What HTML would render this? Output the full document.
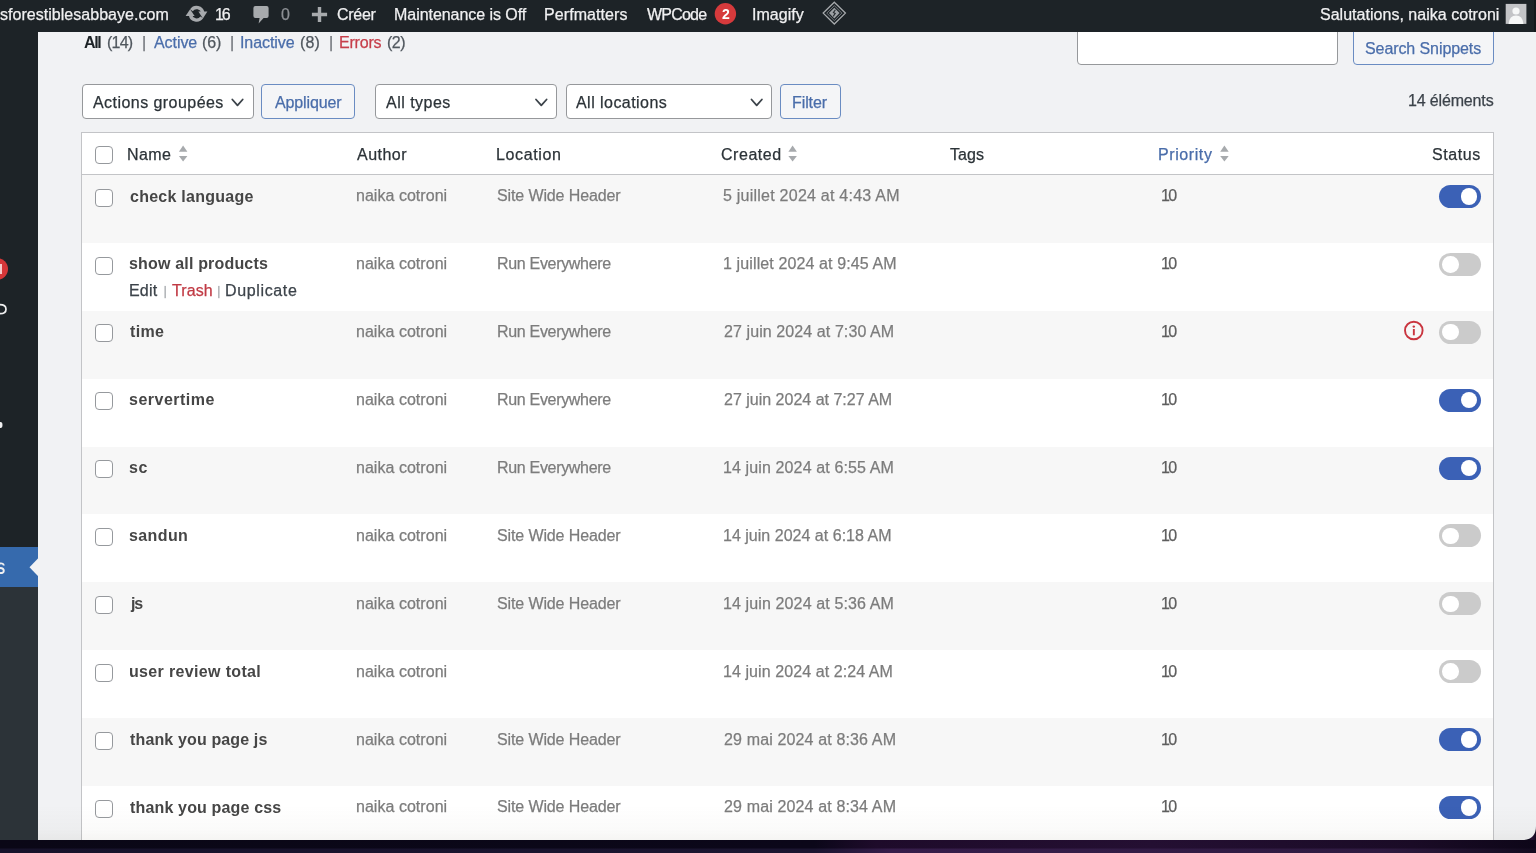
<!DOCTYPE html>
<html><head><meta charset="utf-8">
<style>
html,body{margin:0;padding:0;}
body{width:1536px;height:853px;overflow:hidden;position:relative;background:#f1f2f4;font-family:"Liberation Sans",sans-serif;}
.a{position:absolute;box-sizing:border-box;}
.t{position:absolute;white-space:nowrap;line-height:1;will-change:transform;font-family:"Liberation Sans",sans-serif;}
.cb{position:absolute;box-sizing:border-box;width:18px;height:18px;border:1.1px solid #96999d;border-radius:4px;background:#fff;left:95px;}
.tg{position:absolute;box-sizing:border-box;left:1439.2px;width:41.6px;height:23px;border-radius:12px;}
.tg.on{background:#3b61b6;}
.tg.off{background:#cbcbcb;}
.tg i{position:absolute;width:16.5px;height:16.5px;border-radius:50%;background:#fff;top:3.25px;}
.tg.on i{left:21.8px;}
.tg.off i{left:3.3px;}
.sel{position:absolute;box-sizing:border-box;top:84.4px;height:34.6px;border:1.2px solid #96989b;border-radius:4px;background:#fff;}
.btn{position:absolute;box-sizing:border-box;border:1px solid #6a8cc2;border-radius:4px;background:#f4f5f7;}
.chev{position:absolute;width:8px;height:8px;border-right:2px solid #3c434a;border-bottom:2px solid #3c434a;transform:rotate(45deg);}
</style></head><body>

<!-- sidebar -->
<div class="a" style="left:0;top:32px;width:38.3px;height:516px;background:#1d2327;"></div>
<div class="a" style="left:0;top:547.4px;width:38.3px;height:39.7px;background:#366aad;"></div>
<div class="a" style="left:0;top:587.1px;width:38.3px;height:253px;background:#2c3338;"></div>

<!-- sidebar details -->
<svg class="a" style="left:0;top:0;" width="40" height="853" viewBox="0 0 40 853">
 <circle cx="-3" cy="269" r="11" fill="#d63638"/>
 <rect x="0" y="264" width="2" height="10" fill="#f6c9c9"/>
 <path d="M0 304.6 Q6 304.6 6 309.2 Q6 313.7 0 313.7" fill="none" stroke="#f0f0f1" stroke-width="1.7"/>
 <ellipse cx="0.5" cy="425" rx="2" ry="3" fill="#f0f0f1"/>
 <path d="M0 563.5 Q3.5 563 3.8 565.5 M0 568 Q3.8 568.2 3.8 570.8 Q3.6 573.3 0 573" fill="none" stroke="#f0f0f1" stroke-width="1.9"/>
 <path d="M38.4 558 L29.5 567.2 L38.4 576.4 Z" fill="#f1f2f4"/>
</svg>
<!-- search -->
<div class="a" style="left:1076.6px;top:20px;width:261.4px;height:45.3px;background:#fff;border:1.2px solid #96989b;border-radius:4px;"></div>
<div class="btn" style="left:1352.5px;top:20px;width:141.4px;height:45.3px;"></div>

<!-- toolbar -->
<div class="sel" style="left:82.25px;width:171.5px;"></div>
<div class="btn" style="left:261.2px;top:84.4px;width:93.5px;height:34.6px;"></div>
<div class="sel" style="left:375.4px;width:181.4px;"></div>
<div class="sel" style="left:566.2px;width:206px;"></div>
<div class="btn" style="left:780px;top:84.4px;width:60.7px;height:34.6px;"></div>

<!-- table -->
<div class="a" style="left:80.9px;top:132px;width:1413px;height:720px;background:#fff;border:1px solid #c3c4c7;"></div>
<div class="a" style="left:81.9px;top:174px;width:1411px;height:1px;background:#c3c4c7;"></div>

<div class="a" style="left:81.9px;top:175.00px;width:1411px;height:67.90px;background:#f7f7f7;"></div>
<div class="a" style="left:81.9px;top:310.80px;width:1411px;height:67.90px;background:#f7f7f7;"></div>
<div class="a" style="left:81.9px;top:446.60px;width:1411px;height:67.90px;background:#f7f7f7;"></div>
<div class="a" style="left:81.9px;top:582.40px;width:1411px;height:67.90px;background:#f7f7f7;"></div>
<div class="a" style="left:81.9px;top:718.20px;width:1411px;height:67.90px;background:#f7f7f7;"></div>
<div class="cb" style="top:146.4px"></div>
<div class="cb" style="top:188.60px"></div>
<div class="cb" style="top:256.50px"></div>
<div class="cb" style="top:324.40px"></div>
<div class="cb" style="top:392.30px"></div>
<div class="cb" style="top:460.20px"></div>
<div class="cb" style="top:528.10px"></div>
<div class="cb" style="top:596.00px"></div>
<div class="cb" style="top:663.90px"></div>
<div class="cb" style="top:731.80px"></div>
<div class="cb" style="top:799.70px"></div>
<div class="tg on" style="top:184.90px"><i></i></div>
<div class="tg off" style="top:252.80px"><i></i></div>
<div class="tg off" style="top:320.70px"><i></i></div>
<div class="tg on" style="top:388.60px"><i></i></div>
<div class="tg on" style="top:456.50px"><i></i></div>
<div class="tg off" style="top:524.40px"><i></i></div>
<div class="tg off" style="top:592.30px"><i></i></div>
<div class="tg off" style="top:660.20px"><i></i></div>
<div class="tg on" style="top:728.10px"><i></i></div>
<div class="tg on" style="top:796.00px"><i></i></div>


<!-- admin bar -->
<div class="a" style="left:0;top:0;width:1536px;height:32.3px;background:#1d2327;"></div>
<svg class="a" style="left:0;top:0;" width="1536" height="33" viewBox="0 0 1536 33">
 <g fill="none" stroke="#a7aaad" stroke-width="3.3">
  <path d="M191.44 10.19 A6.3 6.3 0 0 1 202.80 12.71"/>
  <path d="M201.76 17.41 A6.3 6.3 0 0 1 190.40 14.89"/>
 </g>
 <path fill="#a7aaad" d="M198.4 11.6 L207.4 11.6 L202.9 18.4 Z"/>
 <path fill="#a7aaad" d="M185.6 16.0 L194.6 16.0 L190.1 9.2 Z"/>
 <path fill="#a7aaad" d="M255.4 6 H266.6 Q268.6 6 268.6 8 V16 Q268.6 18 266.6 18 H263.6 L258.6 23.5 L259.6 18 H255.4 Q253.4 18 253.4 16 V8 Q253.4 6 255.4 6 Z"/>
 <path fill="#a7aaad" d="M317.8 6.9 H321.2 V12.8 H327.1 V16.2 H321.2 V22 H317.8 V16.2 H311.9 V12.8 H317.8 Z"/>
 <circle cx="725.4" cy="13.8" r="10.7" fill="#d63a3c"/>
 <path d="M834.3 2.2 L845.4 13.1 L834.3 24 L823.2 13.1 Z" fill="none" stroke="#a7aaad" stroke-width="1.3"/>
 <path d="M834.3 5.6 L841.8 13.1 L834.3 20.6 L826.8 13.1 Z" fill="none" stroke="#73787d" stroke-width="1"/>
 <path fill="#9da1a5" d="M834.3 7.8 L839.6 13.1 L834.3 18.4 L829 13.1 Z"/>
 <path fill="none" stroke="#2a2f33" stroke-width="1.1" d="M835.4 9.8 L833.4 12.6 L835.2 13.4 L833.2 16.4"/>
 <rect x="1505.7" y="3.9" width="20.7" height="20" fill="#c3c4c7"/>
 <circle cx="1516" cy="11" r="3.6" fill="#f6f7f7"/>
 <path fill="#f6f7f7" d="M1508.5 23.9 Q1509.5 15.6 1516 15.6 Q1522.5 15.6 1523.5 23.9 Z"/>
</svg>
<div class="a" style="left:1534px;top:0;width:2px;height:32.3px;background:#15191c;"></div>
<div class="t" style="left:-0.50px;top:6.76px;font-size:16px;color:#f0f0f1;letter-spacing:0.033px;-webkit-text-stroke:0.25px #f0f0f1">sforestiblesabbaye.com</div>
<div class="t" style="left:215.40px;top:6.76px;font-size:16px;color:#f0f0f1;letter-spacing:-2.150px;-webkit-text-stroke:0.25px #f0f0f1">16</div>
<div class="t" style="left:281.00px;top:6.76px;font-size:16px;color:#8c8f94;letter-spacing:0.000px;-webkit-text-stroke:0.25px #8c8f94">0</div>
<div class="t" style="left:336.70px;top:6.76px;font-size:16px;color:#f0f0f1;letter-spacing:-0.275px;-webkit-text-stroke:0.25px #f0f0f1">Créer</div>
<div class="t" style="left:393.70px;top:6.76px;font-size:16px;color:#f0f0f1;letter-spacing:-0.047px;-webkit-text-stroke:0.25px #f0f0f1">Maintenance is Off</div>
<div class="t" style="left:544.30px;top:6.76px;font-size:16px;color:#f0f0f1;letter-spacing:0.080px;-webkit-text-stroke:0.25px #f0f0f1">Perfmatters</div>
<div class="t" style="left:647.20px;top:6.76px;font-size:16px;color:#f0f0f1;letter-spacing:-0.780px;-webkit-text-stroke:0.25px #f0f0f1">WPCode</div>
<div class="t" style="left:752.10px;top:6.76px;font-size:16px;color:#f0f0f1;letter-spacing:0.050px;-webkit-text-stroke:0.25px #f0f0f1">Imagify</div>
<div class="t" style="left:1319.70px;top:6.76px;font-size:16px;color:#f0f0f1;letter-spacing:0.024px;-webkit-text-stroke:0.25px #f0f0f1">Salutations, naika cotroni</div>
<div class="t" style="left:84.30px;top:34.96px;font-size:16px;color:#1d2327;letter-spacing:-1.400px;font-weight:700">All</div>
<div class="t" style="left:107.30px;top:34.96px;font-size:16px;color:#50575e;letter-spacing:-0.767px;-webkit-text-stroke:0.25px #50575e">(14)</div>
<div class="t" style="left:142.40px;top:34.96px;font-size:16px;color:#6f7378;letter-spacing:0.000px;-webkit-text-stroke:0.25px #6f7378">|</div>
<div class="t" style="left:153.60px;top:34.96px;font-size:16px;color:#4a6daa;letter-spacing:-0.060px;-webkit-text-stroke:0.25px #4a6daa">Active</div>
<div class="t" style="left:201.60px;top:34.96px;font-size:16px;color:#50575e;letter-spacing:-0.150px;-webkit-text-stroke:0.25px #50575e">(6)</div>
<div class="t" style="left:229.60px;top:34.96px;font-size:16px;color:#6f7378;letter-spacing:0.000px;-webkit-text-stroke:0.25px #6f7378">|</div>
<div class="t" style="left:240.00px;top:34.96px;font-size:16px;color:#4a6daa;letter-spacing:-0.071px;-webkit-text-stroke:0.25px #4a6daa">Inactive</div>
<div class="t" style="left:300.00px;top:34.96px;font-size:16px;color:#50575e;letter-spacing:0.100px;-webkit-text-stroke:0.25px #50575e">(8)</div>
<div class="t" style="left:328.50px;top:34.96px;font-size:16px;color:#6f7378;letter-spacing:0.000px;-webkit-text-stroke:0.25px #6f7378">|</div>
<div class="t" style="left:339.00px;top:34.96px;font-size:16px;color:#c63e4a;letter-spacing:-0.200px;-webkit-text-stroke:0.25px #c63e4a">Errors</div>
<div class="t" style="left:386.50px;top:34.96px;font-size:16px;color:#50575e;letter-spacing:-0.500px;-webkit-text-stroke:0.25px #50575e">(2)</div>
<div class="t" style="left:1364.60px;top:40.76px;font-size:16px;color:#4a6daa;letter-spacing:-0.086px;-webkit-text-stroke:0.25px #4a6daa">Search Snippets</div>
<div class="t" style="left:93.20px;top:95.06px;font-size:16px;color:#2c3338;letter-spacing:0.447px;-webkit-text-stroke:0.25px #2c3338">Actions groupées</div>
<div class="t" style="left:274.60px;top:95.06px;font-size:16px;color:#4a6daa;letter-spacing:-0.125px;-webkit-text-stroke:0.25px #4a6daa">Appliquer</div>
<div class="t" style="left:385.90px;top:95.06px;font-size:16px;color:#2c3338;letter-spacing:0.475px;-webkit-text-stroke:0.25px #2c3338">All types</div>
<div class="t" style="left:576.30px;top:95.06px;font-size:16px;color:#2c3338;letter-spacing:0.450px;-webkit-text-stroke:0.25px #2c3338">All locations</div>
<div class="t" style="left:791.80px;top:95.06px;font-size:16px;color:#4a6daa;letter-spacing:-0.100px;-webkit-text-stroke:0.25px #4a6daa">Filter</div>
<div class="t" style="left:1407.90px;top:92.76px;font-size:16px;color:#3c434a;letter-spacing:-0.150px;-webkit-text-stroke:0.25px #3c434a">14 éléments</div>
<div class="t" style="left:127.30px;top:147.46px;font-size:16px;color:#2c3338;letter-spacing:0.400px;-webkit-text-stroke:0.25px #2c3338">Name</div>
<div class="t" style="left:356.60px;top:147.46px;font-size:16px;color:#2c3338;letter-spacing:0.480px;-webkit-text-stroke:0.25px #2c3338">Author</div>
<div class="t" style="left:496.20px;top:147.46px;font-size:16px;color:#2c3338;letter-spacing:0.643px;-webkit-text-stroke:0.25px #2c3338">Location</div>
<div class="t" style="left:720.70px;top:147.46px;font-size:16px;color:#2c3338;letter-spacing:0.533px;-webkit-text-stroke:0.25px #2c3338">Created</div>
<div class="t" style="left:950.20px;top:147.46px;font-size:16px;color:#2c3338;letter-spacing:0.067px;-webkit-text-stroke:0.25px #2c3338">Tags</div>
<div class="t" style="left:1158.30px;top:147.46px;font-size:16px;color:#4a6daa;letter-spacing:0.586px;-webkit-text-stroke:0.25px #4a6daa">Priority</div>
<div class="t" style="left:1432.20px;top:147.46px;font-size:16px;color:#2c3338;letter-spacing:0.580px;-webkit-text-stroke:0.25px #2c3338">Status</div>
<div class="t" style="left:130.00px;top:188.56px;font-size:16px;color:#464646;letter-spacing:0.254px;font-weight:700">check language</div>
<div class="t" style="left:355.60px;top:188.36px;font-size:16px;color:#7c7c7c;letter-spacing:0.033px;-webkit-text-stroke:0.25px #7c7c7c">naika cotroni</div>
<div class="t" style="left:496.50px;top:188.36px;font-size:16px;color:#7c7c7c;letter-spacing:-0.120px;-webkit-text-stroke:0.25px #7c7c7c">Site Wide Header</div>
<div class="t" style="left:722.60px;top:188.36px;font-size:16px;color:#7c7c7c;letter-spacing:0.237px;-webkit-text-stroke:0.25px #7c7c7c">5 juillet 2024 at 4:43 AM</div>
<div class="t" style="left:1160.70px;top:188.36px;font-size:16px;color:#5e5e5e;letter-spacing:-1.700px;-webkit-text-stroke:0.25px #5e5e5e">10</div>
<div class="t" style="left:129.00px;top:256.46px;font-size:16px;color:#464646;letter-spacing:0.175px;font-weight:700">show all products</div>
<div class="t" style="left:355.60px;top:256.26px;font-size:16px;color:#7c7c7c;letter-spacing:0.033px;-webkit-text-stroke:0.25px #7c7c7c">naika cotroni</div>
<div class="t" style="left:496.50px;top:256.26px;font-size:16px;color:#7c7c7c;letter-spacing:-0.315px;-webkit-text-stroke:0.25px #7c7c7c">Run Everywhere</div>
<div class="t" style="left:722.60px;top:256.26px;font-size:16px;color:#7c7c7c;letter-spacing:0.121px;-webkit-text-stroke:0.25px #7c7c7c">1 juillet 2024 at 9:45 AM</div>
<div class="t" style="left:1160.70px;top:256.26px;font-size:16px;color:#5e5e5e;letter-spacing:-1.700px;-webkit-text-stroke:0.25px #5e5e5e">10</div>
<div class="t" style="left:130.00px;top:324.36px;font-size:16px;color:#464646;letter-spacing:0.333px;font-weight:700">time</div>
<div class="t" style="left:355.60px;top:324.16px;font-size:16px;color:#7c7c7c;letter-spacing:0.033px;-webkit-text-stroke:0.25px #7c7c7c">naika cotroni</div>
<div class="t" style="left:496.50px;top:324.16px;font-size:16px;color:#7c7c7c;letter-spacing:-0.315px;-webkit-text-stroke:0.25px #7c7c7c">Run Everywhere</div>
<div class="t" style="left:723.60px;top:324.16px;font-size:16px;color:#7c7c7c;letter-spacing:0.091px;-webkit-text-stroke:0.25px #7c7c7c">27 juin 2024 at 7:30 AM</div>
<div class="t" style="left:1160.70px;top:324.16px;font-size:16px;color:#5e5e5e;letter-spacing:-1.700px;-webkit-text-stroke:0.25px #5e5e5e">10</div>
<div class="t" style="left:129.00px;top:392.26px;font-size:16px;color:#464646;letter-spacing:0.489px;font-weight:700">servertime</div>
<div class="t" style="left:355.60px;top:392.06px;font-size:16px;color:#7c7c7c;letter-spacing:0.033px;-webkit-text-stroke:0.25px #7c7c7c">naika cotroni</div>
<div class="t" style="left:496.50px;top:392.06px;font-size:16px;color:#7c7c7c;letter-spacing:-0.315px;-webkit-text-stroke:0.25px #7c7c7c">Run Everywhere</div>
<div class="t" style="left:723.60px;top:392.06px;font-size:16px;color:#7c7c7c;letter-spacing:0.000px;-webkit-text-stroke:0.25px #7c7c7c">27 juin 2024 at 7:27 AM</div>
<div class="t" style="left:1160.70px;top:392.06px;font-size:16px;color:#5e5e5e;letter-spacing:-1.700px;-webkit-text-stroke:0.25px #5e5e5e">10</div>
<div class="t" style="left:129.00px;top:460.16px;font-size:16px;color:#464646;letter-spacing:0.700px;font-weight:700">sc</div>
<div class="t" style="left:355.60px;top:459.96px;font-size:16px;color:#7c7c7c;letter-spacing:0.033px;-webkit-text-stroke:0.25px #7c7c7c">naika cotroni</div>
<div class="t" style="left:496.50px;top:459.96px;font-size:16px;color:#7c7c7c;letter-spacing:-0.315px;-webkit-text-stroke:0.25px #7c7c7c">Run Everywhere</div>
<div class="t" style="left:722.60px;top:459.96px;font-size:16px;color:#7c7c7c;letter-spacing:0.123px;-webkit-text-stroke:0.25px #7c7c7c">14 juin 2024 at 6:55 AM</div>
<div class="t" style="left:1160.70px;top:459.96px;font-size:16px;color:#5e5e5e;letter-spacing:-1.700px;-webkit-text-stroke:0.25px #5e5e5e">10</div>
<div class="t" style="left:129.00px;top:528.06px;font-size:16px;color:#464646;letter-spacing:0.400px;font-weight:700">sandun</div>
<div class="t" style="left:355.60px;top:527.86px;font-size:16px;color:#7c7c7c;letter-spacing:0.033px;-webkit-text-stroke:0.25px #7c7c7c">naika cotroni</div>
<div class="t" style="left:496.50px;top:527.86px;font-size:16px;color:#7c7c7c;letter-spacing:-0.120px;-webkit-text-stroke:0.25px #7c7c7c">Site Wide Header</div>
<div class="t" style="left:722.60px;top:527.86px;font-size:16px;color:#7c7c7c;letter-spacing:0.018px;-webkit-text-stroke:0.25px #7c7c7c">14 juin 2024 at 6:18 AM</div>
<div class="t" style="left:1160.70px;top:527.86px;font-size:16px;color:#5e5e5e;letter-spacing:-1.700px;-webkit-text-stroke:0.25px #5e5e5e">10</div>
<div class="t" style="left:131.00px;top:595.96px;font-size:16px;color:#464646;letter-spacing:-1.200px;font-weight:700">js</div>
<div class="t" style="left:355.60px;top:595.76px;font-size:16px;color:#7c7c7c;letter-spacing:0.033px;-webkit-text-stroke:0.25px #7c7c7c">naika cotroni</div>
<div class="t" style="left:496.50px;top:595.76px;font-size:16px;color:#7c7c7c;letter-spacing:-0.120px;-webkit-text-stroke:0.25px #7c7c7c">Site Wide Header</div>
<div class="t" style="left:722.60px;top:595.76px;font-size:16px;color:#7c7c7c;letter-spacing:0.123px;-webkit-text-stroke:0.25px #7c7c7c">14 juin 2024 at 5:36 AM</div>
<div class="t" style="left:1160.70px;top:595.76px;font-size:16px;color:#5e5e5e;letter-spacing:-1.700px;-webkit-text-stroke:0.25px #5e5e5e">10</div>
<div class="t" style="left:129.00px;top:663.86px;font-size:16px;color:#464646;letter-spacing:0.344px;font-weight:700">user review total</div>
<div class="t" style="left:355.60px;top:663.66px;font-size:16px;color:#7c7c7c;letter-spacing:0.033px;-webkit-text-stroke:0.25px #7c7c7c">naika cotroni</div>
<div class="t" style="left:722.60px;top:663.66px;font-size:16px;color:#7c7c7c;letter-spacing:0.082px;-webkit-text-stroke:0.25px #7c7c7c">14 juin 2024 at 2:24 AM</div>
<div class="t" style="left:1160.70px;top:663.66px;font-size:16px;color:#5e5e5e;letter-spacing:-1.700px;-webkit-text-stroke:0.25px #5e5e5e">10</div>
<div class="t" style="left:130.00px;top:731.76px;font-size:16px;color:#464646;letter-spacing:0.137px;font-weight:700">thank you page js</div>
<div class="t" style="left:355.60px;top:731.56px;font-size:16px;color:#7c7c7c;letter-spacing:0.033px;-webkit-text-stroke:0.25px #7c7c7c">naika cotroni</div>
<div class="t" style="left:496.50px;top:731.56px;font-size:16px;color:#7c7c7c;letter-spacing:-0.120px;-webkit-text-stroke:0.25px #7c7c7c">Site Wide Header</div>
<div class="t" style="left:723.60px;top:731.56px;font-size:16px;color:#7c7c7c;letter-spacing:0.143px;-webkit-text-stroke:0.25px #7c7c7c">29 mai 2024 at 8:36 AM</div>
<div class="t" style="left:1160.70px;top:731.56px;font-size:16px;color:#5e5e5e;letter-spacing:-1.700px;-webkit-text-stroke:0.25px #5e5e5e">10</div>
<div class="t" style="left:130.00px;top:799.66px;font-size:16px;color:#464646;letter-spacing:0.159px;font-weight:700">thank you page css</div>
<div class="t" style="left:355.60px;top:799.46px;font-size:16px;color:#7c7c7c;letter-spacing:0.033px;-webkit-text-stroke:0.25px #7c7c7c">naika cotroni</div>
<div class="t" style="left:496.50px;top:799.46px;font-size:16px;color:#7c7c7c;letter-spacing:-0.120px;-webkit-text-stroke:0.25px #7c7c7c">Site Wide Header</div>
<div class="t" style="left:723.60px;top:799.46px;font-size:16px;color:#7c7c7c;letter-spacing:0.143px;-webkit-text-stroke:0.25px #7c7c7c">29 mai 2024 at 8:34 AM</div>
<div class="t" style="left:1160.70px;top:799.46px;font-size:16px;color:#5e5e5e;letter-spacing:-1.700px;-webkit-text-stroke:0.25px #5e5e5e">10</div>
<div class="t" style="left:129.40px;top:282.86px;font-size:16px;color:#3c434a;letter-spacing:0.200px;-webkit-text-stroke:0.25px #3c434a">Edit</div>
<div class="t" style="left:171.80px;top:282.86px;font-size:16px;color:#c03a44;letter-spacing:0.100px;-webkit-text-stroke:0.25px #c03a44">Trash</div>
<div class="t" style="left:224.70px;top:282.86px;font-size:16px;color:#3c434a;letter-spacing:0.638px;-webkit-text-stroke:0.25px #3c434a">Duplicate</div>
<div class="t" style="left:721.80px;top:7.35px;font-size:14px;color:#fff;letter-spacing:0.000px;font-weight:700">2</div>
<svg class="a" style="left:0;top:0;" width="1536" height="200" viewBox="0 0 1536 200">
 <g fill="none" stroke="#3c434a" stroke-width="1.8" stroke-linecap="round" stroke-linejoin="round">
  <path d="M232.3 99.5 L237.5 105.3 L242.7 99.5"/>
  <path d="M536 99.5 L541.3 105.3 L546.6 99.5"/>
  <path d="M751.5 99.5 L756.7 105.3 L761.9 99.5"/>
 </g>
 <g fill="#a7aaad">
  <path d="M183.1 145.5 L187.4 151.7 L178.9 151.7 Z"/>
  <path d="M178.9 155.9 L187.4 155.9 L183.1 161.6 Z"/>
  <path d="M792.6 145.5 L796.9 151.7 L788.4 151.7 Z"/>
  <path d="M788.4 155.9 L796.9 155.9 L792.6 161.6 Z"/>
  <path d="M1224.4 145.5 L1228.7 151.7 L1220.2 151.7 Z"/>
  <path d="M1220.2 155.9 L1228.7 155.9 L1224.4 161.6 Z"/>
 </g>
</svg>
<svg class="a" style="left:0;top:0;" width="1536" height="853" viewBox="0 0 1536 853">
 <circle cx="1413.8" cy="330.5" r="8.8" fill="none" stroke="#c9353f" stroke-width="1.9"/>
 <circle cx="1413.8" cy="326.6" r="1.2" fill="#c9353f"/>
 <rect x="1412.9" y="329" width="1.9" height="6.3" fill="#c9353f"/>
 <rect x="164.5" y="285.9" width="1.3" height="12.3" fill="#a3a7ab"/>
 <rect x="218.2" y="285.9" width="1.3" height="12.3" fill="#a3a7ab"/>
</svg>


<!-- window bottom -->
<div class="a" style="left:38.3px;top:805px;width:1497.7px;height:35px;background:linear-gradient(to bottom, rgba(0,0,0,0) 0%, rgba(80,70,40,0.025) 70%, rgba(80,70,40,0.055) 100%);"></div>
<svg class="a" style="left:0;top:826px;" width="1536" height="27" viewBox="0 826 1536 27">
 <defs>
  <linearGradient id="bg" x1="0" x2="1" y1="0" y2="0">
   <stop offset="0" stop-color="#0a0716"/>
   <stop offset="0.53" stop-color="#0b0719"/>
   <stop offset="0.57" stop-color="#1e0b2a"/>
   <stop offset="0.75" stop-color="#240f32"/>
   <stop offset="0.92" stop-color="#1a0b26"/>
   <stop offset="1" stop-color="#0d0618"/>
  </linearGradient>
  <linearGradient id="bg2" x1="0" x2="1" y1="0" y2="0">
   <stop offset="0" stop-color="#16122a"/>
   <stop offset="0.53" stop-color="#1b1530"/>
   <stop offset="0.58" stop-color="#361d4a"/>
   <stop offset="0.9" stop-color="#2e1a40"/>
   <stop offset="0.965" stop-color="#1c1029"/>
   <stop offset="1" stop-color="#120a1e"/>
  </linearGradient>
 </defs>
 <path d="M0 840 H1536 V853 H0 Z" fill="url(#bg)"/>
 <rect x="0" y="848.5" width="1536" height="4.5" fill="url(#bg2)"/>
 <path d="M1536 826 V840 H1522 Q1536 840 1536 826 Z" fill="url(#bg)"/>
</svg>
</body></html>
